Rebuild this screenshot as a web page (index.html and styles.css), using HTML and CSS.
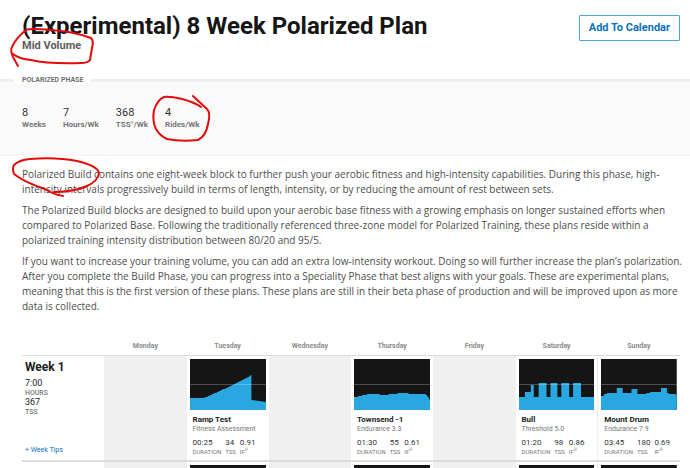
FILE: index.html
```
<!DOCTYPE html>
<html lang="en">
<head>
<meta charset="utf-8">
<meta name="viewport" content="width=device-width, initial-scale=1">
<title>(Experimental) 8 Week Polarized Plan</title>
<link rel="stylesheet" href="styles.css">
</head>
<body>
<header class="plan-header">
  <div>
    <h1 class="plan-title">(Experimental) 8 Week Polarized Plan</h1>
    <p class="plan-volume">Mid Volume</p>
  </div>
  <button class="calendar-button" type="button">Add To Calendar</button>
</header>
<main>
  <section class="phase">
    <h2 class="phase-heading"><span>POLARIZED PHASE</span></h2>
    <dl class="stats">
      <div><dd>8</dd><dt>Weeks</dt></div>
      <div><dd>7</dd><dt>Hours/Wk</dt></div>
      <div><dd>368</dd><dt>TSS<sup>®</sup>/Wk</dt></div>
      <div><dd>4</dd><dt>Rides/Wk</dt></div>
    </dl>
  </section>
  <section class="description">
    <p>Polarized Build contains one eight-week block to further push your aerobic fitness and high-intensity capabilities. During this phase, high-<br>intensity intervals progressively build in terms of length, intensity, or by reducing the amount of rest between sets.</p>
    <p>The Polarized Build blocks are designed to build upon your aerobic base fitness with a growing emphasis on longer sustained efforts when<br>compared to Polarized Base. Following the traditionally referenced three-zone model for Polarized Training, these plans reside within a<br>polarized training intensity distribution between 80/20 and 95/5.</p>
    <p>If you want to increase your training volume, you can add an extra low-intensity workout. Doing so will further increase the plan’s polarization.<br>After you complete the Build Phase, you can progress into a Speciality Phase that best aligns with your goals. These are experimental plans,<br>meaning that this is the first version of these plans. These plans are still in their beta phase of production and will be improved upon as more<br>data is collected.</p>
  </section>
  <table class="schedule">
    <thead>
      <tr><td></td><th scope="col">Monday</th><th scope="col">Tuesday</th><th scope="col">Wednesday</th><th scope="col">Thursday</th><th scope="col">Friday</th><th scope="col">Saturday</th><th scope="col">Sunday</th></tr>
    </thead>
    <tbody>
      <tr>
        <th class="week" scope="row">
          <div class="week-body">
            <h3>Week 1</h3>
            <dl><dd>7:00</dd><dt>HOURS</dt><dd>367</dd><dt>TSS</dt></dl>
            <a href="#tips">+ Week Tips</a>
          </div>
        </th>
        <td class="rest"></td>
        <td class="ride">
          <svg class="chart" viewBox="0 0 77 51" preserveAspectRatio="none"><rect width="77" height="51"/><path class="power" d="M0 51V39H15V38H18V37H20V36H22V35H24V34H27V33H29V32H31V31H33V30H36V29H38V28H40V27H42V26H44V25H46V24H48V23H50V22H52V21H54V20H56V19H58V18H60V17H61V16H62V41L77 43V51Z"/><path class="ftp" d="M0 25.500H77"/></svg>
          <h4>Ramp Test</h4><p>Fitness Assessment</p>
          <dl><div><dd>00:25</dd><dt>DURATION</dt></div><div><dd>34</dd><dt>TSS</dt></div><div><dd>0.91</dd><dt>IF<sup>®</sup></dt></div></dl>
        </td>
        <td class="rest"></td>
        <td class="ride">
          <svg class="chart" viewBox="0 0 77 51" preserveAspectRatio="none"><rect width="77" height="51"/><path class="power" d="M0 51V38H4V37H8V36H13V35H26V36H35V35H44V34H55V35H65V35H72L74 37L77 41V51Z"/><path class="ftp" d="M0 25.500H77"/></svg>
          <h4>Townsend -1</h4><p>Endurance 3.3</p>
          <dl><div><dd>01:30</dd><dt>DURATION</dt></div><div><dd>55</dd><dt>TSS</dt></div><div><dd>0.61</dd><dt>IF<sup>®</sup></dt></div></dl>
        </td>
        <td class="rest"></td>
        <td class="ride">
          <svg class="chart" viewBox="0 0 77 51" preserveAspectRatio="none"><rect width="77" height="51"/><path class="power" d="M0 51V38H6V33H12V26H15V38H20V24H28V38H32V24H39V38H43V24H51V38H55V24H63V38H77V51Z"/><path class="ftp" d="M0 25.500H77"/></svg>
          <h4>Bull</h4><p>Threshold 5.0</p>
          <dl><div><dd>01:20</dd><dt>DURATION</dt></div><div><dd>98</dd><dt>TSS</dt></div><div><dd>0.86</dd><dt>IF<sup>®</sup></dt></div></dl>
        </td>
        <td class="ride">
          <svg class="chart" viewBox="0 0 77 51" preserveAspectRatio="none"><rect width="77" height="51"/><path class="power" d="M0 51V37H3V35H6V34H16V29H22V34H31V30H37V35H46V34H50V33H61V29H67V34H69V35H76V36H77V51Z"/><path class="ftp" d="M0 25.500H77"/></svg>
          <h4>Mount Drum</h4><p>Endurance 7.9</p>
          <dl><div><dd>03:45</dd><dt>DURATION</dt></div><div><dd>180</dd><dt>TSS</dt></div><div><dd>0.69</dd><dt>IF<sup>®</sup></dt></div></dl>
        </td>
      </tr>
      <tr>
        <td></td><td class="rest"></td>
        <td class="ride"><svg class="chart" viewBox="0 0 77 51" preserveAspectRatio="none"><rect width="77" height="51"/></svg></td>
        <td class="rest"></td>
        <td class="ride"><svg class="chart" viewBox="0 0 77 51" preserveAspectRatio="none"><rect width="77" height="51"/></svg></td>
        <td class="rest"></td>
        <td class="ride"><svg class="chart" viewBox="0 0 77 51" preserveAspectRatio="none"><rect width="77" height="51"/></svg></td>
        <td class="ride"><svg class="chart" viewBox="0 0 77 51" preserveAspectRatio="none"><rect width="77" height="51"/></svg></td>
      </tr>
    </tbody>
  </table>
</main>
<svg class="markup" width="220" height="210" viewBox="0 0 220 210" aria-hidden="true">
  <path d="M18 66L13 57Q10 50 12 47Q16 38 26 30Q30 28 50 30Q72 31 91 38Q94 41 92 48L90 60Q88 63 81 63Q48 64 31 60Q19 59 13 54"/>
  <path d="M201 107Q194 102 182 99Q169 96 164 97Q158 99 154 110Q152 121 156 129Q160 136 167 139Q181 142 198 140Q206 136 208 124Q211 113 207 109L193 96"/>
  <path d="M63 196Q52 194 45 189Q24 182 14 174Q12 168 14 165Q19 160 30 159Q56 157 77 161Q98 166 99 173Q98 181 87 186Q73 192 54 192"/>
</svg>
</body>
</html>
```
FILE: styles.css
```
* { box-sizing: border-box; margin: 0; padding: 0; }
html, body { height: 100vh; overflow: hidden; }
body {
  position: relative;
  background: #fff;
  color: #4d4d4d;
  font-family: Roboto, "Liberation Sans", sans-serif;
  font-size: 11px;
  line-height: 15px;
}
.plan-header {
  display: flex;
  justify-content: space-between;
  align-items: flex-start;
  padding: 12px 10px 25px 22px;
}
.plan-title { font-size: 24px; line-height: 28px; font-weight: 700; color: #161616; }
.plan-volume { font-size: 11px; line-height: 12px; font-weight: 700; color: #5c5c5c; }
.calendar-button {
  margin-top: 3px;
  height: 26px;
  padding: 0 9px;
  border: 1px solid #4ba3dc;
  border-radius: 1px;
  background: #fff;
  color: #0b70bd;
  font: 700 11px/24px Roboto, "Liberation Sans", sans-serif;
}
.phase-heading {
  display: flex;
  align-items: center;
  height: 6px;
  color: #707070;
  font-size: 7px;
  line-height: 10px;
  font-weight: 700;
}
.phase-heading::before { content: ""; width: 14px; height: 3px; background: #eee; }
.phase-heading::after { content: ""; flex: 1; height: 3px; background: #eee; }
.phase-heading span { padding: 0 8px; }
.stats {
  display: flex;
  gap: 17px;
  padding: 23px 22px 24px;
  background: #fafafa;
  border-bottom: 1px solid #f3f3f3;
}
.stats div { display: flex; flex-direction: column; }
.stats dd { font-size: 11px; line-height: 13px; color: #333; }
.stats dt { font-size: 8px; line-height: 12px; font-weight: 700; color: #777; }
sup { font-size: 4px; line-height: 0; vertical-align: 3px; }
.description {
  padding: 11px 10px 0 22px;
  font-family: "Open Sans", "Liberation Sans", sans-serif;
  font-size: 10px;
  white-space: nowrap;
}
.description p + p { margin-top: 6px; }
.schedule {
  width: calc(100% - 32px);
  margin: 23px 10px 0 22px;
  table-layout: fixed;
  border-collapse: collapse;
}
.schedule thead th {
  height: 18px;
  color: #8b8b8b;
  font-size: 7px;
  line-height: 18px;
  font-weight: 700;
}
.schedule tbody tr { border-top: 2px solid #dcdcdc; }
.schedule tbody tr:first-child { border-top-width: 1px; }
.schedule tbody th, .schedule tbody td { vertical-align: top; text-align: left; }
.schedule .rest { background: #f0f0f0; }
.schedule .ride { padding: 3px; }
.ride + .ride { border-left: 1px solid #eee; }
.week-body { display: flex; flex-direction: column; height: 104px; padding: 3px; }
.week h3 { font-size: 12px; line-height: 16px; color: #1c1c1c; }
.week dl { margin-top: 3px; font-weight: 400; }
.week dd { font-size: 9px; line-height: 11px; color: #222; }
.week dt { font-size: 7px; line-height: 8px; font-weight: 500; color: #777; }
.week a {
  margin-top: auto;
  color: #0b70bd;
  font-size: 7px;
  line-height: 14px;
  font-weight: 400;
  text-decoration: none;
}
.chart { display: block; width: 100%; height: 51px; fill: #151515; }
.power { fill: #29a7e0; }
.ftp { stroke: #fff; stroke-opacity: .25; }
.ride h4, .ride p, .ride dl { margin-left: 3px; white-space: nowrap; }
.ride h4 { margin-top: 4px; font-size: 8px; line-height: 11px; color: #1c1c1c; }
.ride p { font-size: 7px; line-height: 9px; color: #777; }
.ride dl { display: flex; gap: 4px; margin-top: 4px; }
.ride dd { font-size: 8px; line-height: 10px; color: #333; }
.ride dt { font-size: 6px; line-height: 8px; color: #777; }
.markup {
  position: absolute;
  top: 0;
  left: 0;
  fill: none;
  stroke: #e20a0a;
  stroke-width: 2;
  stroke-linecap: round;
  stroke-linejoin: round;
  pointer-events: none;
}
```
